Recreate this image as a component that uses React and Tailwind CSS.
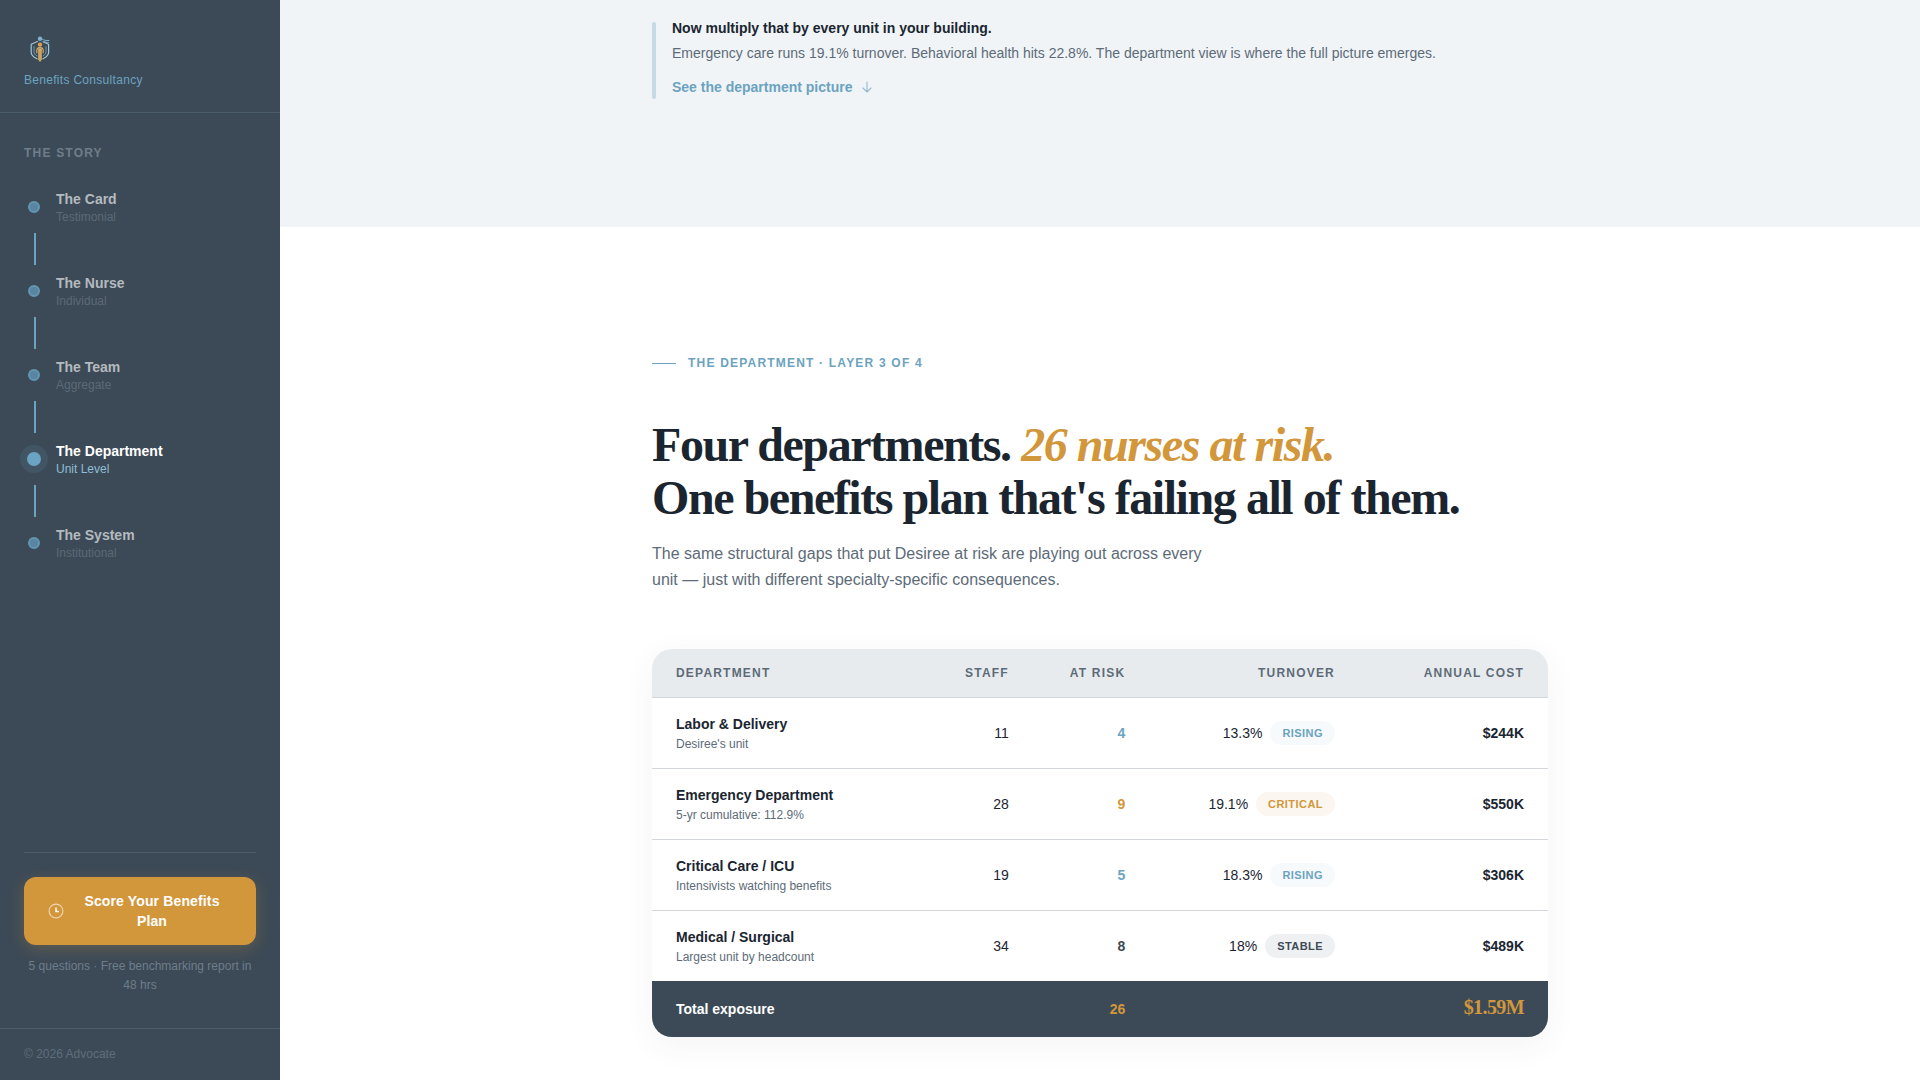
const STEPS = [
  { title: "The Card", sub: "Testimonial" },
  { title: "The Nurse", sub: "Individual" },
  { title: "The Team", sub: "Aggregate" },
  { title: "The Department", sub: "Unit Level", active: true },
  { title: "The System", sub: "Institutional" },
];

const TONES = {
  blue: { text: "text-[#6ba3c0]", pill: "bg-[#f6fafc] text-[#6ba3c0]" },
  amber: { text: "text-[#d2963b]", pill: "bg-[#fbf7f0] text-[#d2963b]" },
  slate: { text: "text-[#3c4a57]", pill: "bg-[#eff0f2] text-[#3c4a57]" },
};

const ROWS = [
  { name: "Labor & Delivery", note: "Desiree's unit", staff: 11, risk: 4, rate: "13.3%", status: "RISING", cost: "$244K", tone: "blue" },
  { name: "Emergency Department", note: "5-yr cumulative: 112.9%", staff: 28, risk: 9, rate: "19.1%", status: "CRITICAL", cost: "$550K", tone: "amber" },
  { name: "Critical Care / ICU", note: "Intensivists watching benefits", staff: 19, risk: 5, rate: "18.3%", status: "RISING", cost: "$306K", tone: "blue" },
  { name: "Medical / Surgical", note: "Largest unit by headcount", staff: 34, risk: 8, rate: "18%", status: "STABLE", cost: "$489K", tone: "slate" },
];

function Logo() {
  return (
    <svg className="size-8" viewBox="0 0 32 32" fill="none" aria-label="Advocate" role="img">
      <g strokeLinecap="round" strokeLinejoin="round">
        <path d="M13.500 9.500 7.200 12.200v8.200c0 2.600 2.400 4.600 5.800 6.400" stroke="#a3c6d8" strokeWidth="1.200" />
        <path d="M19 9.800 24.600 12.200v8.200c0 2.600-2.400 4.600-5.600 6.400" stroke="#a3c6d8" strokeWidth="1.200" />
        <path d="M10 14.500v5.400c0 1.600 1 2.800 2.800 3.900M22 14.500v5.400c0 1.600-1 2.800-2.800 3.900" stroke="#6f9db8" strokeWidth="0.900" />
        <path d="M18 7c2 1.400 4.200 1.700 6.800 1.500M20 9.600c1.400.7 2.900.9 4.400.8" stroke="#7fb3d0" strokeWidth="1" />
      </g>
      <circle cx="16" cy="6.800" r="2.200" fill="#7db2cf" />
      <circle cx="16" cy="12.600" r="2.200" fill="#d6a352" />
      <path d="M12.800 20.800v-2.400c0-1.700 1.400-2.800 3.200-2.800s3.200 1.100 3.200 2.800v2.400" stroke="#dcb16a" strokeWidth="1.100" strokeLinecap="round" />
      <path d="M14.200 16.500h3.600v11L16 30l-1.800-2.500z" fill="#dcae62" />
      <path d="M16 19v9" stroke="#8d7a55" strokeWidth="0.500" />
    </svg>
  );
}

function ClockIcon() {
  return (
    <svg className="size-4 shrink-0" viewBox="0 0 16 16" fill="none" aria-hidden="true">
      <circle cx="8" cy="8" r="6.900" stroke="#fff" strokeOpacity="0.600" strokeWidth="1.200" />
      <path d="M8 4.500V8.500H11" stroke="#fff" strokeWidth="1.400" />
    </svg>
  );
}

function ArrowDown() {
  return (
    <svg className="size-3" viewBox="0 0 12 12" fill="none" aria-hidden="true">
      <path d="M6 1v10M2 7l4 4 4-4" stroke="#6ba3c0" strokeOpacity="0.700" strokeWidth="1.100" strokeLinecap="round" strokeLinejoin="round" />
    </svg>
  );
}

function Step({ title, sub, active }) {
  return (
    <a href="#" className="flex items-center gap-3 py-2">
      <span className="flex w-5 justify-center">
        {active ? (
          <span className="size-3.5 rounded-full bg-[#6ba3c4] ring-[7px] ring-[#6ba3c4]/12" />
        ) : (
          <span className="size-3 rounded-full border-2 border-[#6396b3] bg-[#5885a1]" />
        )}
      </span>
      <span>
        <span className={active ? "block text-sm font-bold text-white" : "block text-sm font-bold text-[#b4babf]"}>{title}</span>
        <span className={active ? "block text-xs text-[#8fbdd4]" : "block text-xs text-[#5b6976]"}>{sub}</span>
      </span>
    </a>
  );
}

function Sidebar() {
  return (
    <aside className="sticky top-0 flex h-screen w-70 shrink-0 flex-col bg-[#3c4a57]">
      <div className="border-b border-[#4c5d6a] px-6 pt-8 pb-6">
        <Logo />
        <p className="mt-2 text-xs tracking-wide text-[#6ba3c0]">Benefits Consultancy</p>
      </div>
      <nav className="flex-1 px-6 pt-8" aria-label="The story">
        <h2 className="mb-5 text-xs font-bold tracking-widest text-[#6f7d89]">THE STORY</h2>
        <ol>
          {STEPS.map((step, i) => (
            <li key={step.title}>
              {i > 0 && <div className="ml-2.5 h-8 w-0.5 bg-[#6ba3c0]" />}
              <Step {...step} />
            </li>
          ))}
        </ol>
      </nav>
      <div className="px-6 pb-[33px]">
        <div className="border-t border-[#4c5d6a] pt-6">
          <button type="button" className="flex w-full items-center gap-2 rounded-xl bg-[#d2963b] px-6 py-3.5 text-sm font-bold tracking-[0.01em] text-white shadow-[0_4px_16px_rgba(210,150,59,0.25)]">
            <ClockIcon />
            <span className="flex-1 text-center">Score Your Benefits Plan</span>
          </button>
          <p className="mt-3 text-center text-xs leading-[19px] text-[#6f7d89]">
            5 questions · Free benchmarking report in 48 hrs
          </p>
        </div>
      </div>
      <footer className="border-t border-[#4c5d6a] px-6 py-4 text-xs leading-[19px] text-[#5f6d7a]">© 2026 Advocate</footer>
    </aside>
  );
}

function DepartmentTable() {
  return (
    <div className="mt-14 overflow-hidden rounded-[20px] bg-white shadow-[0_8px_32px_rgba(60,74,87,0.06)]">
      <table className="w-full table-fixed text-right text-sm text-[#1a2530]">
        <colgroup>
          <col />
          <col className="w-[13%]" />
          <col className="w-[13%]" />
          <col className="w-[23.4%]" />
          <col className="w-[21.1%]" />
        </colgroup>
        <thead className="border-b border-[#d3d7db] bg-[#e8ebed] text-xs tracking-widest text-[#5d6b78]">
          <tr>
            <th scope="col" className="px-6 py-4 text-left">DEPARTMENT</th>
            <th scope="col" className="px-6 py-4">STAFF</th>
            <th scope="col" className="px-6 py-4">AT RISK</th>
            <th scope="col" className="px-6 py-4">TURNOVER</th>
            <th scope="col" className="px-6 py-4">ANNUAL COST</th>
          </tr>
        </thead>
        <tbody className="divide-y divide-[#d3d7db]">
          {ROWS.map((r) => (
            <tr key={r.name}>
              <th scope="row" className="px-6 py-4 text-left font-normal">
                <div className="font-bold">{r.name}</div>
                <div className="mt-0.5 text-xs text-[#5d6b78]">{r.note}</div>
              </th>
              <td className="px-6 py-4">{r.staff}</td>
              <td className={`px-6 py-4 font-bold ${TONES[r.tone].text}`}>{r.risk}</td>
              <td className="px-6 py-4">
                <div className="flex items-center justify-end gap-2">
                  {r.rate}
                  <span className={`rounded-full px-3 py-1 text-[11px] leading-4 font-bold tracking-[0.04em] ${TONES[r.tone].pill}`}>{r.status}</span>
                </div>
              </td>
              <td className="px-6 py-4 font-bold">{r.cost}</td>
            </tr>
          ))}
        </tbody>
        <tfoot className="bg-[#3c4a57] leading-6 font-bold text-[#d2963b]">
          <tr>
            <th scope="row" className="px-6 py-4 text-left text-white">Total exposure</th>
            <td />
            <td className="px-6 py-4">26</td>
            <td />
            <td className="px-6 py-4">
              <span className="font-['Liberation_Serif',serif] text-xl leading-none tracking-[-0.03em]">$1.59M</span>
            </td>
          </tr>
        </tfoot>
      </table>
    </div>
  );
}

export default function App() {
  return (
    <div className="flex min-h-screen bg-white font-['Liberation_Sans',Arial,sans-serif]">
      <Sidebar />
      <main className="min-w-0 flex-1">
        <section className="bg-[#f0f4f7] px-6 pt-[17px] pb-32">
          <div className="mx-auto flex max-w-4xl gap-4 text-sm">
            <div className="mt-[5px] w-1 shrink-0 rounded-xs bg-[#c5dae5]" />
            <div className="pb-px">
              <p className="leading-[22px] font-bold text-[#1a2530]">Now multiply that by every unit in your building.</p>
              <p className="mt-1 leading-[21px] text-[#5d6b78]">
                Emergency care runs 19.1% turnover. Behavioral health hits 22.8%. The department view is where the full picture emerges.
              </p>
              <a href="#department" className="mt-3 flex items-center gap-2 leading-[22px] font-bold text-[#6ba3c0]">
                See the department picture
                <ArrowDown />
              </a>
            </div>
          </div>
        </section>
        <section id="department" className="px-6 pt-32 pb-10">
          <div className="mx-auto max-w-4xl">
            <div className="flex items-center gap-3 text-xs font-bold tracking-widest text-[#6ba3c0]">
              <span className="h-px w-6 bg-[#6ba3c0]" />
              THE DEPARTMENT · LAYER 3 OF 4
            </div>
            <h1 className="mt-[47px] font-['Liberation_Serif',serif] text-5xl leading-[53px] font-bold tracking-[-0.03em] text-[#1a2530]">
              Four departments. <em className="text-[#d2963b]">26 nurses at risk.</em>
              <br />
              One benefits plan that's failing all of them.
            </h1>
            <p className="mt-[17px] max-w-xl text-base leading-[26px] text-[#5d6b78]">
              The same structural gaps that put Desiree at risk are playing out across every unit — just with different specialty-specific consequences.
            </p>
            <DepartmentTable />
          </div>
        </section>
      </main>
    </div>
  );
}
